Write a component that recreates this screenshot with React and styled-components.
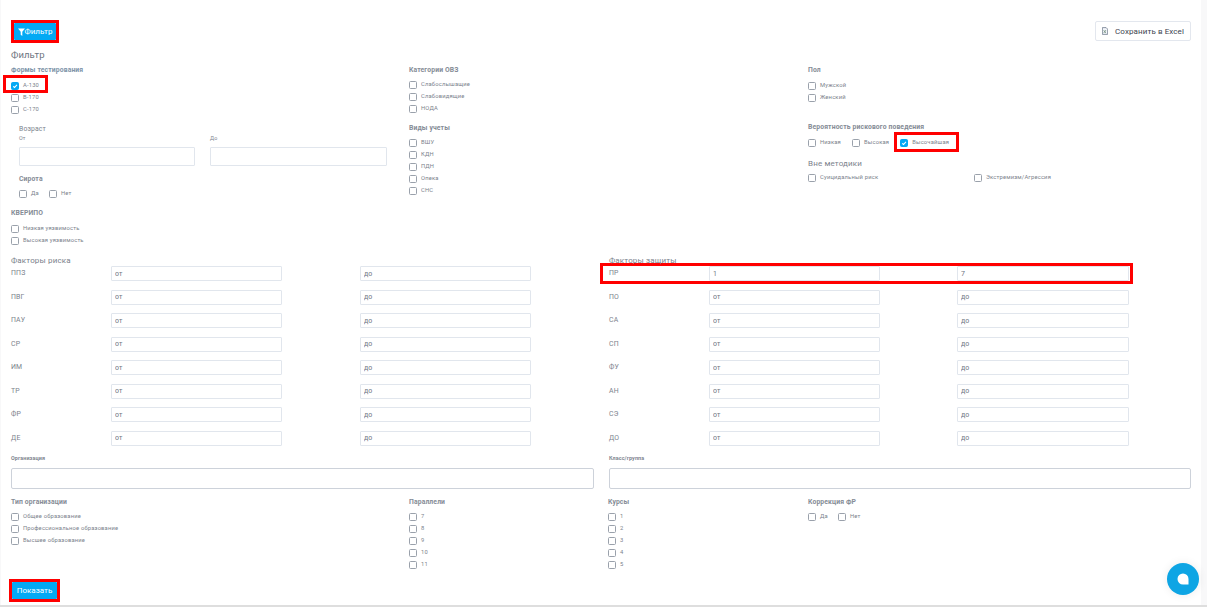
import React from "react";
import styled, { createGlobalStyle } from "styled-components";

const Global = createGlobalStyle`
  html, body { margin: 0; padding: 0; background: #fff; overflow: hidden; }
  * { box-sizing: border-box; }
  body { font-family: Roboto, "Noto Sans", sans-serif; color: #6f7782; }
`;

const Frame = styled.div`
  width: 1207px; height: 607px; display: flex; flex-direction: column; background: #f8f8f9;
`;
const Main = styled.main`
  width: 1201px; height: 605px; background: #fff; padding: 23px 10px 0 10px; position: relative;
  border-left: 1px solid #f8f8f9;
`;
const BottomStrip = styled.div`
  height: 2px; background: #dedede;
`;
const Toolbar = styled.div`
  display: flex; justify-content: space-between; align-items: flex-start; padding-left: 3px;
`;
const Marked = styled.span`
  position: relative; display: inline-flex;
  &::after {
    content: ""; position: absolute; pointer-events: none; border: 3px solid #f00;
    top: ${p => p.$t ?? -3}px; bottom: ${p => p.$b ?? -3}px; left: ${p => p.$l ?? -3}px; right: ${p => p.$r ?? -3}px;
  }
`;
const PrimaryButton = styled.button`
  border: 0; background: #03a9f4; color: #fff; height: 17px; width: ${p => p.$w}px; padding: 0; 
  font: 400 8px Roboto, sans-serif; display: inline-flex; align-items: center; justify-content: center; gap: 0;
  border-radius: 1px;
`;
const ExcelButton = styled.button`
  border: 1px solid #e3e7ee; background: #fff; color: #3d4450; height: 20px; width: 96px; margin-top: -2px;
  font: 400 8px Roboto, sans-serif; display: inline-flex; align-items: center; gap: 7px; padding: 0 6px;
  border-radius: 2px; letter-spacing: .1px; white-space: nowrap;
`;
const PageTitle = styled.h2`
  margin: 8px 0 0; font: 400 9.5px/12px Roboto, sans-serif; color: #6d7480; letter-spacing: .1px;
`;
const TopGrid = styled.div`
  display: grid; grid-template-columns: 398px 399px 1fr; margin-top: 4px;
`;
const Column = styled.div`
  display: flex; flex-direction: column; align-items: flex-start;
`;
const GroupTitle = styled.div`
  font: 700 6.8px/10px Roboto, sans-serif; color: ${p => p.$blue ? "#7d93a8" : "#858c96"}; letter-spacing: .12px;
  margin-top: ${p => p.$top ?? 0}px;
`;
const CheckList = styled.div`
  display: flex; flex-direction: ${p => p.$row ? "row" : "column"}; margin-top: ${p => p.$top ?? 7}px;
  gap: ${p => p.$row ? (p.$gap ?? 11) : 4}px;
`;
const CheckRow = styled.label`
  display: flex; align-items: center; height: 8px; gap: 4px; width: ${p => p.$w ? p.$w + "px" : "auto"};
`;
const Box = styled.span`
  width: 8px; height: 8px; flex: none; border-radius: 1.5px; display: flex; align-items: center; justify-content: center;
  border: 1px solid ${p => p.$on ? "#03a9f4" : "#9aa1ab"}; background: ${p => p.$on ? "#03a9f4" : "#fff"};
`;
const CheckText = styled.span`
  font: 400 5.8px/8px Roboto, sans-serif; color: #7b828c; white-space: nowrap; letter-spacing: .18px;
  position: relative; top: -1px;
`;
const AgeBlock = styled.div`
  margin: 10px 0 0 8px; width: 368px;
`;
const PlainTitle = styled.div`
  font: 400 ${p => p.$size ?? 6.8}px/10px Roboto, sans-serif; color: #7c838d; letter-spacing: .15px;
  margin-top: ${p => p.$top ?? 0}px;
`;
const AgeGrid = styled.div`
  display: grid; grid-template-columns: 176px 177px; gap: 15px; 
`;
const AgeField = styled.div`
  display: flex; flex-direction: column;
`;
const TinyLabel = styled.div`
  font: ${p => p.$bold ? 700 : 400} 5.4px/9px Roboto, sans-serif; color: #7f8690; letter-spacing: .1px;
`;
const AgeInput = styled.input`
  height: 19px; width: 100%; border: 1px solid #e1e6ed; border-radius: 1px; margin-top: 4px; background: #fff; outline: 0;
`;
const Indent = styled.div`
  margin-left: 8px;
`;
const FactorsGrid = styled.div`
  display: grid; grid-template-columns: 598px 1fr; margin-top: 11px;
`;
const FactorHead = styled.div`
  font: 400 8px/10px Roboto, sans-serif; color: #7a818b; letter-spacing: .15px;
  position: relative; z-index: 1;
`;
const FactorRow = styled.div`
  position: relative; display: grid; width: 520px; grid-template-columns: 100px 171px 1fr; align-items: center;
  height: 15px; margin-bottom: 8.5px;
  &::after {
    content: ${p => p.$marked ? '""' : "none"}; position: absolute; pointer-events: none;
    inset: -3px -4px -3px -9px; border: 3px solid #f00;
  }
`;
const FactorLabel = styled.div`
  font: 400 6.9px/15px Roboto, sans-serif; color: #7b828c; letter-spacing: .2px;
`;
const FactorInput = styled.input`
  height: 15px; width: ${p => p.$wide ? 172 : 171}px; border: 1px solid #e1e6ed; border-radius: 1px; padding: 0 3px; outline: 0; background: #fff;
  font: 400 7px Roboto, sans-serif; color: #6f7682;
  justify-self: ${p => p.$end ? "end" : "start"};
  &::placeholder { color: #6f7682; opacity: 1; }
`;
const OrgGrid = styled.div`
  display: grid; grid-template-columns: 583px 582px; column-gap: 15px; margin-top: 0;
`;
const OrgField = styled.div`
  display: flex; flex-direction: column; gap: 5px;
`;
const OrgInput = styled.input`
  height: 21px; border: 1px solid #cdd2da; border-radius: 2px; outline: 0; background: #fff;
`;
const BottomGrid = styled.div`
  display: grid; grid-template-columns: 398px 199px 200px 1fr; margin-top: 8px; height: 78px;
`;
const ShowRow = styled.div`
  padding-left: 1px; margin-top: 3px;
`;
const ChatBubble = styled.div`
  position: absolute; left: 1166px; top: 563px; width: 32px; height: 32px; border-radius: 50%;
  background: #0ea5e4; display: flex; align-items: center; justify-content: center;
  box-shadow: 0 0 10px rgba(0,0,0,.08);
`;

const Check = ({ label, on, w }) => (
  <CheckRow $w={w}>
    <Box $on={on}>
      {on && (
        <svg width="6" height="6" viewBox="0 0 10 10" fill="none">
          <path d="M2 5.5 4.2 7.5 8.2 3" stroke="#fff" strokeWidth="1.8" />
        </svg>
      )}
    </Box>
    <CheckText>{label}</CheckText>
  </CheckRow>
);

const Funnel = () => (
  <svg width="7" height="8" viewBox="0 0 7 8" fill="#fff">
    <path d="M0 .5h7L4.3 3.8V8L2.7 6.8v-3z" />
  </svg>
);

const ExcelIcon = () => (
  <svg width="8" height="10" viewBox="0 0 8 10" fill="none">
    <path d="M.5.5h5l2 2v7h-7z" stroke="#59667a" strokeWidth=".9" fill="#f2f5fa" />
    <path d="M2.2 3.8 5.2 7.8M5.2 3.8 2.2 7.8" stroke="#5d7f6a" strokeWidth=".9" />
  </svg>
);

const risk = ["ППЗ", "ПВГ", "ПАУ", "СР", "ИМ", "ТР", "ФР", "ДЕ"];
const protect = ["ПР", "ПО", "СА", "СП", "ФУ", "АН", "СЭ", "ДО"];

const Factor = ({ name, marked, from, to, wide }) => (
  <FactorRow $marked={marked}>
    <FactorLabel>{name}</FactorLabel>
    <FactorInput placeholder="от" defaultValue={from} />
    <FactorInput $end $wide={wide} placeholder="до" defaultValue={to} />
  </FactorRow>
);

export default function App() {
  return (
    <Frame>
      <Global />
      <Main>
        <Toolbar>
          <Marked>
            <PrimaryButton $w={42}><Funnel />Фильтр</PrimaryButton>
          </Marked>
          <ExcelButton><ExcelIcon />Сохранить в Excel</ExcelButton>
        </Toolbar>
        <PageTitle>Фильтр</PageTitle>
        <TopGrid>
          <Column>
            <GroupTitle $blue>Формы тестирования</GroupTitle>
            <CheckList>
              <Marked $t={-7} $b={-3} $l={-8} $r={-9}><Check on label="А-130" /></Marked>
              <Check label="В-170" />
              <Check label="С-170" />
            </CheckList>
            <AgeBlock>
              <PlainTitle>Возраст</PlainTitle>
              <AgeGrid>
                <AgeField><TinyLabel>От</TinyLabel><AgeInput /></AgeField>
                <AgeField><TinyLabel>До</TinyLabel><AgeInput /></AgeField>
              </AgeGrid>
            </AgeBlock>
            <Indent>
              <GroupTitle $top={8}>Сирота</GroupTitle>
              <CheckList $row $top={6} $gap={10}>
                <Check label="Да" />
                <Check label="Нет" />
              </CheckList>
            </Indent>
            <GroupTitle $top={10}>КВЕРИПО</GroupTitle>
            <CheckList>
              <Check label="Низкая уязвимость" />
              <Check label="Высокая уязвимость" />
            </CheckList>
          </Column>
          <Column>
            <GroupTitle>Категории ОВЗ</GroupTitle>
            <CheckList $top={6}>
              <Check label="Слабослышащие" />
              <Check label="Слабовидящие" />
              <Check label="НОДА" />
            </CheckList>
            <GroupTitle $top={10}>Виды учеты</GroupTitle>
            <CheckList $top={6}>
              <Check label="ВШУ" />
              <Check label="КДН" />
              <Check label="ПДН" />
              <Check label="Опека" />
              <Check label="СНС" />
            </CheckList>
          </Column>
          <Column>
            <GroupTitle>Пол</GroupTitle>
            <CheckList>
              <Check label="Мужской" />
              <Check label="Женский" />
            </CheckList>
            <GroupTitle $top={20}>Вероятность рискового поведения</GroupTitle>
            <CheckList $row $top={7} $gap={11}>
              <Check label="Низкая" />
              <Check label="Высокая" />
              <Marked $t={-7} $b={-5} $l={-6} $r={-10}><Check on label="Высочайшая" /></Marked>
            </CheckList>
            <PlainTitle $size={8} $top={12}>Вне методики</PlainTitle>
            <CheckList $row $top={5} $gap={0}>
              <Check w={166} label="Суицидальный риск" />
              <Check label="Экстремизм/Агрессия" />
            </CheckList>
          </Column>
        </TopGrid>
        <FactorsGrid>
          <div>
            <FactorHead>Факторы риска</FactorHead>
            {risk.map(n => <Factor key={n} name={n} />)}
          </div>
          <div>
            <FactorHead>Факторы защиты</FactorHead>
            {protect.map((n, i) => (
              <Factor key={n} name={n} wide marked={i === 0} from={i === 0 ? "1" : undefined} to={i === 0 ? "7" : undefined} />
            ))}
          </div>
        </FactorsGrid>
        <OrgGrid>
          <OrgField><TinyLabel $bold>Организация</TinyLabel><OrgInput /></OrgField>
          <OrgField><TinyLabel $bold>Класс/группа</TinyLabel><OrgInput /></OrgField>
        </OrgGrid>
        <BottomGrid>
          <Column>
            <GroupTitle>Тип организации</GroupTitle>
            <CheckList $top={6}>
              <Check label="Общее образование" />
              <Check label="Профессиональное образование" />
              <Check label="Высшее образование" />
            </CheckList>
          </Column>
          <Column>
            <GroupTitle>Параллели</GroupTitle>
            <CheckList $top={6}>
              {["7", "8", "9", "10", "11"].map(v => <Check key={v} label={v} />)}
            </CheckList>
          </Column>
          <Column>
            <GroupTitle>Курсы</GroupTitle>
            <CheckList $top={6}>
              {["1", "2", "3", "4", "5"].map(v => <Check key={v} label={v} />)}
            </CheckList>
          </Column>
          <Column>
            <GroupTitle>Коррекция ФР</GroupTitle>
            <CheckList $row $top={6} $gap={10}>
              <Check label="Да" />
              <Check label="Нет" />
            </CheckList>
          </Column>
        </BottomGrid>
        <ShowRow>
          <Marked><PrimaryButton $w={45}>Показать</PrimaryButton></Marked>
        </ShowRow>
        <ChatBubble>
          <svg width="12" height="12" viewBox="0 0 12 12" fill="#fff">
            <path d="M6 .5a5.5 5.5 0 1 0 0 11h5.5V6A5.5 5.5 0 0 0 6 .5z" />
          </svg>
        </ChatBubble>
      </Main>
      <BottomStrip />
    </Frame>
  );
}
